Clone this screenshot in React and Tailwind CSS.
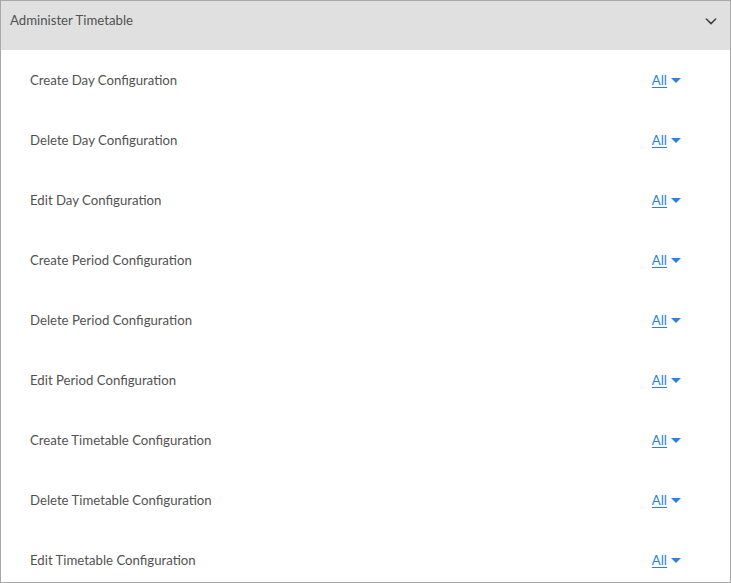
const items = [
  "Create Day Configuration",
  "Delete Day Configuration",
  "Edit Day Configuration",
  "Create Period Configuration",
  "Delete Period Configuration",
  "Edit Period Configuration",
  "Create Timetable Configuration",
  "Delete Timetable Configuration",
  "Edit Timetable Configuration",
];

const App = () => {
  return (
    <div
      className="h-[583px] w-[731px] overflow-hidden border border-[#a8a8a8] bg-white text-[13.2px] text-[#525252]"
      style={{ fontFamily: "Lato, 'Liberation Sans', sans-serif" }}
    >
      {/* HEADER */}
      <div className="flex h-[49px] items-center justify-between bg-[#e0e0e0] pl-[9px] pr-[11px]">
        <span className="-mt-[10px]">Administer Timetable</span>
        <svg width="16" height="16" viewBox="0 0 24 24" className="-mt-[9px]" fill="none" stroke="#444" strokeWidth="2.4" strokeLinecap="round" strokeLinejoin="round">
          <path d="M5 9l7 7 7-7" />
        </svg>
      </div>

      {/* ROWS */}
      <div className="flex flex-col pt-[1px]">
        {items.map((item, i) => (
          <div key={i} className="flex h-[60px] shrink-0 items-center justify-between pl-[29px] pr-[49px]">
            <span>{item}</span>
            <div className="flex items-center gap-[4px] text-[#2d7fe6]">
              <span className="underline underline-offset-2">All</span>
              <svg width="10" height="6" viewBox="0 0 10 6">
                <path d="M0 0h10L5 5z" fill="#2d7fe6" />
              </svg>
            </div>
          </div>
        ))}
      </div>
    </div>
  );
};

export default App;
